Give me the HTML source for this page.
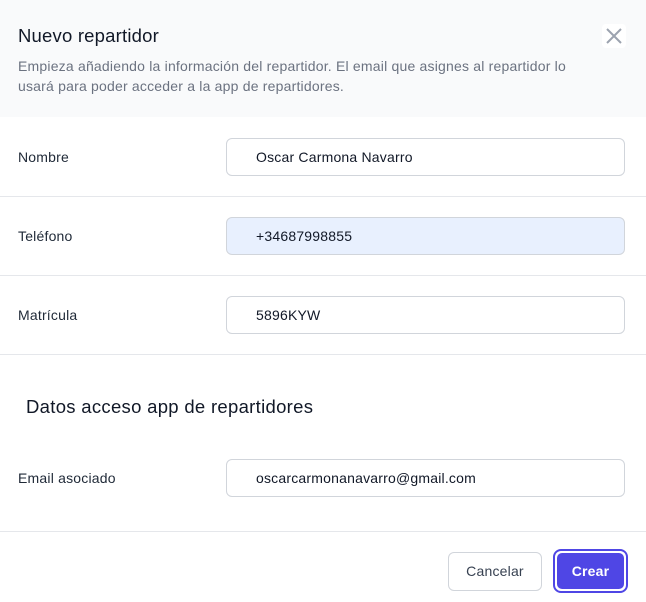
<!DOCTYPE html>
<html><head><meta charset="utf-8"><style>
*{box-sizing:border-box;margin:0;padding:0}
body{width:646px;height:602px;background:#fff;font-family:"Liberation Sans",sans-serif;position:relative;overflow:hidden;color:#111827;letter-spacing:0.2px}
.hdr{position:absolute;left:0;top:0;width:646px;height:117px;background:#f9fafb}
.t{position:absolute;left:18px;top:25px;font-size:18.5px;color:#111827}
.d{position:absolute;left:18px;top:56px;width:572px;font-size:14px;line-height:20px;color:#6b7280}
.x{position:absolute;left:602px;top:24px;width:24px;height:24px;background:#fff;border-radius:4px}
.lbl{position:absolute;left:18px;font-size:14px;color:#1f2937}
.in{position:absolute;left:226px;width:399px;height:38px;border:1px solid #d1d5db;border-radius:6px;font-size:14px;color:#111827;padding-left:29px;line-height:36px}
.hr{position:absolute;left:0;width:646px;height:1px;background:#e5e7eb}
.sec{position:absolute;left:26px;top:396px;font-size:18.5px;color:#111827;letter-spacing:0.3px}
.bc{position:absolute;left:448px;top:552px;width:94px;height:39px;border:1px solid #d1d5db;border-radius:6px;font-size:14px;color:#374151;text-align:center;line-height:37px}
.bk{position:absolute;left:553px;top:549px;width:75px;height:44px;border:2px solid #4f46e5;border-radius:8px;padding:2px}
.bk div{width:100%;height:100%;background:#4f46e5;border-radius:5px;color:#fff;font-weight:bold;font-size:14px;text-align:center;line-height:36px}
</style></head><body>
<div class="hdr"></div>
<div class="t">Nuevo repartidor</div>
<div class="d">Empieza añadiendo la información del repartidor. El email que asignes al repartidor lo usará para poder acceder a la app de repartidores.</div>
<div class="x"><svg width="24" height="24" viewBox="0 0 24 24"><path d="M5 5L19 19M19 5L5 19" stroke="#9ca3af" stroke-width="2" fill="none"/></svg></div>
<div class="lbl" style="top:149px">Nombre</div>
<div class="in" style="top:138px">Oscar Carmona Navarro</div>
<div class="hr" style="top:196px"></div>
<div class="lbl" style="top:228px">Teléfono</div>
<div class="in" style="top:217px;background:#e8f0fe">+34687998855</div>
<div class="hr" style="top:275px"></div>
<div class="lbl" style="top:307px">Matrícula</div>
<div class="in" style="top:296px">5896KYW</div>
<div class="hr" style="top:354px"></div>
<div class="sec">Datos acceso app de repartidores</div>
<div class="lbl" style="top:470px">Email asociado</div>
<div class="in" style="top:459px">oscarcarmonanavarro@gmail.com</div>
<div class="hr" style="top:531px"></div>
<div class="bc">Cancelar</div>
<div class="bk"><div>Crear</div></div>
</body></html>
